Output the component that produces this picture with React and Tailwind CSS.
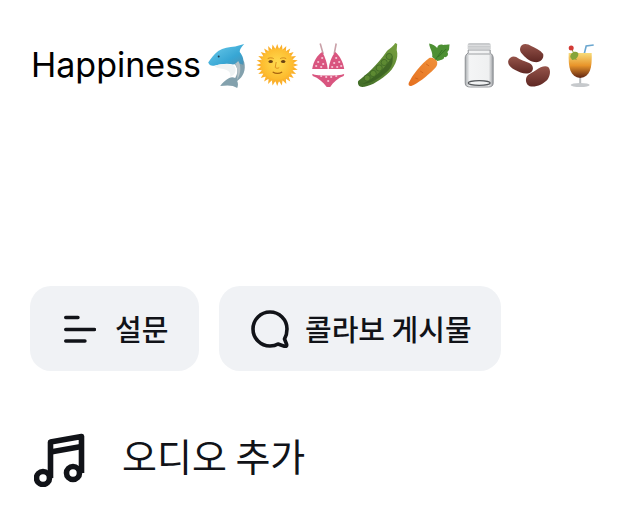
const KOREAN = { fontFamily: '"Noto Sans CJK KR", "Noto Sans", sans-serif' };

function Dolphin() {
  return (
    <svg viewBox="0 0 50 50" className="h-[50px] w-full">
      <defs>
        <linearGradient id="dolphinBody" x1="0" y1="0" x2="1" y2="1">
          <stop offset="0" stopColor="#6fcdec" />
          <stop offset="0.65" stopColor="#37a6d4" />
          <stop offset="1" stopColor="#4f8fae" />
        </linearGradient>
      </defs>
      <path d="M33 38C36 33 36 27 32 24C35 24 37 20 38 16L42 22C44 30 41 37 35 41C36 43 36 46 35 48C31 45 25 45 18 46C20 43 23 40 27 38C29 37 31 37 33 38Z" fill="#83a1ad" />
      <path d="M6 22.5C9 18 12 14 16 11C21 8 27 7 33 6.5L42 4C39 7 37.5 9.5 37.5 12C41 16 42 21 41 25C38 23 34 23 31 24.5C25 23 19 24 13 25.5C9 26.5 7 25 6 22.5Z" fill="url(#dolphinBody)" />
      <path d="M12 26C18 24 27 23 32 26C35 30 33 35 28 37C29 32 26 30 21 29C17 28 14 28 12 26Z" fill="#eef2f3" />
      <path d="M36 21C39 25 39 33 35 40C35.5 33 35.5 27 33 24Z" fill="#b5c2c7" />
      <circle cx="16.5" cy="16.5" r="1" fill="#1b3d50" />
    </svg>
  );
}

function Sun() {
  const rays = Array.from({ length: 28 }, (_, i) => (i * 360) / 28);
  return (
    <svg viewBox="0 0 50 50" className="h-[50px] w-full">
      <defs>
        <radialGradient id="sunFace" cx="0.5" cy="0.45" r="0.6">
          <stop offset="0" stopColor="#ffdc50" />
          <stop offset="0.8" stopColor="#fdbb2e" />
          <stop offset="1" stopColor="#f6a322" />
        </radialGradient>
      </defs>
      {rays.map((angle) => (
        <path key={angle} d="M23.2 9L25 4L26.8 9Z" fill="#fbb02a" transform={`rotate(${angle} 25 25)`} />
      ))}
      <circle cx="25" cy="25" r="16.5" fill="url(#sunFace)" />
      <ellipse cx="18.5" cy="21.5" rx="2.2" ry="1.5" fill="#6b4213" />
      <ellipse cx="31" cy="21.5" rx="2.2" ry="1.5" fill="#6b4213" />
      <path d="M15.5 18.6C17 17.6 20 17.6 21.5 18.6M28 18.6C29.5 17.6 32.5 17.6 34 18.6" stroke="#c67a17" strokeWidth="0.8" fill="none" />
      <path d="M24 22L23 27.5C24 28.5 26 28.5 27 27.5" stroke="#d98a1a" strokeWidth="0.9" fill="none" />
      <path d="M20.5 32C23.5 33.8 27 33.8 30 32" stroke="#a8640f" strokeWidth="1.1" fill="none" />
    </svg>
  );
}

function Bikini() {
  const dots = [
    [15, 22], [19, 18], [20, 24], [13, 26], [18, 27], [33, 18], [31, 23], [36, 22], [34, 27], [38, 26], [29, 27],
    [18, 36], [23, 37], [28, 37], [33, 36], [25, 41],
  ];
  return (
    <svg viewBox="0 0 50 50" className="h-[50px] w-full">
      <path d="M17 3.5L20 14M33 3.5L31 14" stroke="#c9a0a8" strokeWidth="1.6" fill="none" />
      <path d="M19 12C22 17 24 23 24.5 29L9 29C10 22 14 15 19 12Z" fill="#d9557f" />
      <path d="M32 12C36 15 40 22 41 29L25.5 29C26 23 28 17 32 12Z" fill="#d9557f" />
      <path d="M9 34C14 36 36 36 41 34L40.5 36C35 38 30 42 27 47L23.5 47C20 42 15 38 9.5 36Z" fill="#d9557f" />
      {dots.map(([x, y]) => (
        <circle key={`${x}-${y}`} cx={x} cy={y} r="1.1" fill="#f7c6d6" />
      ))}
    </svg>
  );
}

function Peapod() {
  return (
    <svg viewBox="0 0 50 50" className="h-[50px] w-full">
      <defs>
        <linearGradient id="podSkin" x1="0" y1="1" x2="1" y2="0">
          <stop offset="0" stopColor="#3f6b26" />
          <stop offset="1" stopColor="#77a03f" />
        </linearGradient>
      </defs>
      <path d="M5 41C14 34 24 25 33 12C35 9 39 8 42 3L44 4L43.5 10C46 18 41 29 33 35C25 42 15 47 9 47C6 47 4 44 5 41Z" fill="url(#podSkin)" />
      <path d="M9 44C20 39 32 29 39 16C41 23 37 30 31 34C24 40 15 44 9 44Z" fill="#355c20" opacity="0.75" />
      {[[14, 38], [20, 33.5], [26, 28], [31, 22.5], [36, 16.5]].map(([x, y]) => (
        <circle key={x} cx={x} cy={y} r="3.1" fill="#5d8a32" stroke="#3a6323" strokeWidth="0.7" />
      ))}
    </svg>
  );
}

function Carrot() {
  return (
    <svg viewBox="0 0 50 50" className="h-[50px] w-full">
      <defs>
        <linearGradient id="carrotSkin" x1="0" y1="1" x2="1" y2="0">
          <stop offset="0" stopColor="#e5701f" />
          <stop offset="1" stopColor="#f0913a" />
        </linearGradient>
      </defs>
      <path d="M28 17C29 12 25 8 25 3.5C29 4 31 6 33 8C33 6 35 4 38 4.5C38 5.5 42 4.5 45.5 4.5C44.5 7 46 10 43 12C45 14 43 18 40 17C40 20 36 20 33 21Z" fill="#4d9033" />
      <path d="M31 20L38 10M34 17L42 9" stroke="#2f6d22" strokeWidth="0.8" />
      <path d="M25 18C28 17 32 19 33 22C33.5 25 32 27 30 29C23 36 13 44 7 46C5 46.5 4 45 4.5 43C8 35 17 24 25 18Z" fill="url(#carrotSkin)" />
      <path d="M22 24L25 26M16 31L19 33M11 38L14 39" stroke="#c85b14" strokeWidth="0.7" />
    </svg>
  );
}

function Jar() {
  return (
    <svg viewBox="0 0 50 50" className="h-[50px] w-full">
      <defs>
        <linearGradient id="jarGlass" x1="0" y1="0" x2="1" y2="0">
          <stop offset="0" stopColor="#a9adb0" />
          <stop offset="0.16" stopColor="#f4f5f6" />
          <stop offset="0.84" stopColor="#eff0f1" />
          <stop offset="1" stopColor="#9a9da1" />
        </linearGradient>
      </defs>
      <path d="M14 10L36 10L36 13C38 14 39 16 39 18L39 43C39 46 37 47 34 47L16 47C13 47 11 46 11 43L11 18C11 16 12 14 14 13Z" fill="url(#jarGlass)" stroke="#7f8286" strokeWidth="0.8" />
      <rect x="13.5" y="3" width="23" height="7.5" rx="2" fill="#c9cbcd" />
      <path d="M13.5 5.5H36.5M13.5 8H36.5" stroke="#e4e5e6" strokeWidth="0.7" />
      <ellipse cx="25" cy="43" rx="11" ry="2.4" fill="none" stroke="#55585c" strokeWidth="1.2" />
      <path d="M14 14L36 14" stroke="#9ea1a4" strokeWidth="1" />
    </svg>
  );
}

function Beans() {
  return (
    <svg viewBox="0 0 50 50" className="h-[50px] w-full">
      <defs>
        <linearGradient id="beanSkin" x1="0" y1="0" x2="0" y2="1">
          <stop offset="0" stopColor="#96544a" />
          <stop offset="1" stopColor="#5e2723" />
        </linearGradient>
      </defs>
      <path d="M16 8C17 3 23 3 27 6C31 8 36 10 39 14C40 19 36 23 30 22C24 21 21 17 18 14C16 12 15.5 10 16 8Z" fill="url(#beanSkin)" />
      <path d="M4 21C5 17 9 15.5 12 17C16 20 21 21 25 23C29 25 30 29 27 32C23 35 16 33 11 30C7 28 3.5 25 4 21Z" fill="url(#beanSkin)" />
      <path d="M22 38C23 34 28 33 32 30C36 27 41 25 44 27C47 30 46 36 43 40C39 44 33 47 27 46.5C23 46 21 42 22 38Z" fill="url(#beanSkin)" />
    </svg>
  );
}

function Cocktail() {
  return (
    <svg viewBox="0 0 50 50" className="h-[50px] w-full">
      <defs>
        <linearGradient id="drink" x1="0" y1="0" x2="0" y2="1">
          <stop offset="0" stopColor="#f7dc7a" />
          <stop offset="0.5" stopColor="#e8942a" />
          <stop offset="1" stopColor="#5f2412" />
        </linearGradient>
      </defs>
      <path d="M27 22L31 6L38.5 5" stroke="#6aa6cf" strokeWidth="1.6" fill="none" />
      <path d="M13.5 13C13 28 15 37 25 38C35 37 37 28 36.5 13Z" fill="url(#drink)" />
      <path d="M16 7L21 20" stroke="#8a9a3a" strokeWidth="1" />
      <circle cx="16" cy="8" r="2.5" fill="#d23a35" />
      <path d="M15 17C15 13 20 10 23 13C24 17 20 20 17 20Z" fill="#86a53a" />
      <path d="M25 38L25 44" stroke="#b9bdc0" strokeWidth="2" />
      <ellipse cx="25" cy="45" rx="9.5" ry="2" fill="#c6c9cc" />
    </svg>
  );
}

function PollIcon() {
  return (
    <svg viewBox="0 0 32 28" className="h-[28px] w-[32px]" stroke="#111318" strokeWidth="3.4" strokeLinecap="round" fill="none">
      <path d="M1.7 2.5H14M1.7 14.5H30.5M1.7 26H21" />
    </svg>
  );
}

function ChatIcon() {
  return (
    <svg viewBox="0 0 38 38" className="h-[38px] w-[38px]" fill="none" stroke="#111318" strokeWidth="3.6" strokeLinejoin="round">
      <path d="M19 2C9.6 2 2 9.6 2 19C2 28.4 9.6 36 19 36C22.5 36 25.5 35 27 34L34 36.5C35.5 36.5 36 35.5 35.5 34L33.5 29C35 26.5 36 23 36 19C36 9.6 28.4 2 19 2Z" />
    </svg>
  );
}

function MusicIcon() {
  return (
    <svg viewBox="0 0 52 54" className="h-[54px] w-[52px]" fill="none" stroke="#111318" strokeWidth="5.6" strokeLinejoin="round">
      <circle cx="9" cy="45" r="6.5" />
      <circle cx="39" cy="40" r="6.5" />
      <path d="M16.5 45V9L47.5 3.5V40" />
      <path d="M16.5 19L47.5 13.5" />
    </svg>
  );
}

export default function App() {
  const EMOJI = [Dolphin, Sun, Bikini, Peapod, Carrot, Jar, Beans, Cocktail];

  return (
    <div className="h-[512px] w-[640px] overflow-hidden bg-white pt-[40px] text-[#111318]">
      <div className="flex h-[50px] items-center pl-[31px]">
        <span className="w-[171px] text-[34px] leading-[50px] text-black [font-family:Inter,sans-serif]">Happiness</span>
        {EMOJI.map((Emoji, i) => (
          <div key={i} className="w-[50.4px]">
            <Emoji />
          </div>
        ))}
      </div>

      <div className="mt-[196px] flex gap-[20px] pl-[30px]" style={KOREAN}>
        <div className="flex h-[85px] w-[169px] items-center gap-[19px] rounded-[21px] bg-[#f0f2f5] pl-[34px]">
          <PollIcon />
          <span className="text-[29px] font-medium leading-none">설문</span>
        </div>
        <div className="flex h-[85px] w-[282px] items-center gap-[16px] rounded-[21px] bg-[#f0f2f5] pl-[32px]">
          <ChatIcon />
          <span className="text-[29px] font-medium leading-none">콜라보 게시물</span>
        </div>
      </div>

      <div className="mt-[62px] flex items-center gap-[36px] pl-[34px]" style={KOREAN}>
        <MusicIcon />
        <span className="-mt-[11px] text-[38px] leading-none">오디오 추가</span>
      </div>
    </div>
  );
}
